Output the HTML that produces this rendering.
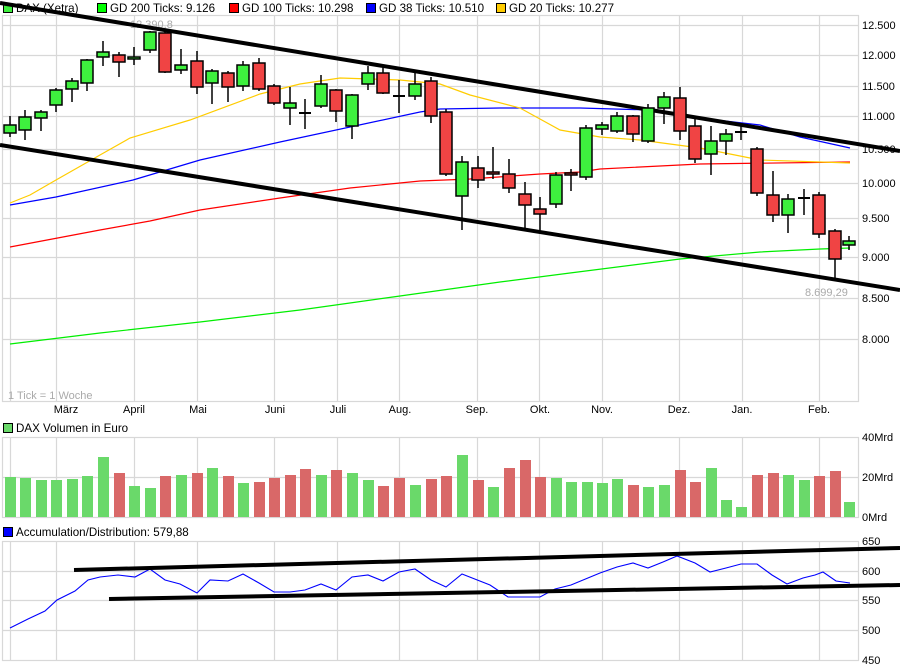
<!DOCTYPE html>
<html><head><meta charset="utf-8"><style>
html,body{margin:0;padding:0;background:#fff;}
svg{display:block;font-family:"Liberation Sans",Arial,sans-serif;}
</style></head><body>
<svg width="900" height="670" viewBox="0 0 900 670" xmlns="http://www.w3.org/2000/svg">
<rect width="900" height="670" fill="#fff"/>
<!-- legend -->
<g font-size="11.6" fill="#000">
<rect x="3.5" y="3.5" width="9" height="9" fill="#3ef03e" stroke="#000"/><text x="16" y="12">DAX (Xetra)</text>
<rect x="97.5" y="3.5" width="9" height="9" fill="#00ff00" stroke="#000"/><text x="110" y="12">GD 200 Ticks: 9.126</text>
<rect x="229.5" y="3.5" width="9" height="9" fill="#ff0000" stroke="#000"/><text x="242" y="12">GD 100 Ticks: 10.298</text>
<rect x="366.5" y="3.5" width="9" height="9" fill="#0000ff" stroke="#000"/><text x="379" y="12">GD 38 Ticks: 10.510</text>
<rect x="496.5" y="3.5" width="9" height="9" fill="#ffcc00" stroke="#000"/><text x="509" y="12">GD 20 Ticks: 10.277</text>
</g>
<!-- main grid -->
<g stroke="#d8d8d8" stroke-width="1.2" fill="none">
<rect x="2.5" y="15.5" width="856" height="386"/>
<path d="M2 25.5H858M2 55.5H858M2 86.5H858M2 116.5H858M2 149.5H858M2 183.5H858M2 218.5H858M2 257.5H858M2 298.5H858M2 339.5H858"/>
<path d="M10.5 15V402M56.5 15V402M134.5 15V402M197.5 15V402M274.5 15V402M337.5 15V402M399.5 15V402M477.5 15V402M539.5 15V402M602.5 15V402M679.5 15V402M742.5 15V402M819.5 15V402"/>
</g>
<g font-size="11" fill="#000">
<text x="862" y="29">12.500</text><text x="862" y="59">12.000</text><text x="862" y="90">11.500</text><text x="862" y="120">11.000</text><text x="862" y="153">10.500</text><text x="862" y="187">10.000</text><text x="862" y="222">9.500</text><text x="862" y="261">9.000</text><text x="862" y="302">8.500</text><text x="862" y="343">8.000</text>
</g>
<g font-size="11" fill="#000" text-anchor="middle">
<text x="66" y="413">März</text><text x="134" y="413">April</text><text x="198" y="413">Mai</text><text x="275" y="413">Juni</text><text x="338" y="413">Juli</text><text x="400" y="413">Aug.</text><text x="477" y="413">Sep.</text><text x="540" y="413">Okt.</text><text x="602" y="413">Nov.</text><text x="679" y="413">Dez.</text><text x="742" y="413">Jan.</text><text x="819" y="413">Feb.</text>
</g>
<text x="8" y="399" font-size="11" fill="#aaa">1 Tick = 1 Woche</text>
<text x="130" y="28" font-size="11" fill="#aaa">12.390,8</text>
<text x="805" y="296" font-size="11" fill="#aaa">8.699,29</text>
<!-- MAs -->
<g fill="none" stroke-width="1.2">
<polyline stroke="#00ee00" points="10,344 100,333 200,322 300,310 400,296 500,282 570,273 680,259 760,252 820,249 850,248"/>
<polyline stroke="#ff0000" points="10,247 100,230 150,221 200,210 280,198 350,188 420,181 470,179 540,174 580,172 600,169 700,164 850,162"/>
<polyline stroke="#0000ff" points="10,205 56,197 133,180 200,160 280,142 350,127 420,112 440,109 500,108 580,108 650,110 690,117 760,125 800,137 850,148"/>
<polyline stroke="#ffcc00" points="10,203 30,195 56,180 100,155 130,138 190,120 260,94 300,84 340,78 400,80 440,84 470,95 520,108 560,130 600,137 640,140 700,148 760,160 850,163"/>
</g>
<!-- trendlines -->
<g stroke="#000" stroke-width="4">
<line x1="0" y1="3" x2="900" y2="151"/>
<line x1="0" y1="145" x2="900" y2="290"/>
</g>
<!-- candles -->
<g stroke="#000" stroke-width="1.5">
<path d="M10 116V137M25 110V140M41 110V131M56 88V112M72 78V102M87 59V91M103 41V66M119 52V77M134 47V65M150 31V53M165 32V73M181 49V74M197 51V94M212 69V104M228 71V102M243 61V91M259 58V91M274 84V105M290 87V125M305 99V129M321 75V108M336 89V122M352 94V139M368 66V90M383 66V94M399 80V113M415 72V100M431 77V123M446 109V176M462 156V230M478 156V188M493 147V179M509 159V193M525 182V229M540 197V233M556 172V208M571 169V191M586 125V180M602 122V135M617 112V133M633 115V142M648 104V143M664 92V124M680 87V140M695 118V163M711 126V175M726 129V155M741 126V140M757 147V196M773 171V222M788 194V233M804 189V215M819 192V238M835 229V281M849 236V250"/>
<path d="M299 113H311M393 96H405M735 132H747M798 198H810M487 173H499M565 174H577" stroke-width="2"/>
<g fill="#3ef03e">
<rect x="4" y="125" width="12" height="8"/><rect x="19" y="117" width="12" height="13"/><rect x="35" y="112" width="12" height="6"/><rect x="50" y="90" width="12" height="15"/><rect x="66" y="81" width="12" height="8"/><rect x="81" y="60" width="12" height="23"/><rect x="97" y="52" width="12" height="5"/><rect x="128" y="57" width="12" height="2"/><rect x="144" y="32" width="12" height="18"/><rect x="175" y="65" width="12" height="5"/><rect x="206" y="71" width="12" height="12"/><rect x="237" y="65" width="12" height="21"/><rect x="284" y="103" width="12" height="5"/><rect x="315" y="84" width="12" height="22"/><rect x="346" y="95" width="12" height="31"/><rect x="362" y="73" width="12" height="11"/><rect x="409" y="84" width="12" height="12"/><rect x="456" y="162" width="12" height="34"/><rect x="550" y="175" width="12" height="29"/><rect x="580" y="128" width="12" height="49"/><rect x="596" y="125" width="12" height="4"/><rect x="611" y="116" width="12" height="15"/><rect x="642" y="108" width="12" height="33"/><rect x="658" y="97" width="12" height="11"/><rect x="705" y="141" width="12" height="13"/><rect x="720" y="134" width="12" height="7"/><rect x="782" y="199" width="12" height="16"/><rect x="843" y="241" width="12" height="4"/>
</g>
<g fill="#f04444">
<rect x="113" y="55" width="12" height="7"/><rect x="159" y="33" width="12" height="39"/><rect x="191" y="61" width="12" height="26"/><rect x="222" y="73" width="12" height="14"/><rect x="253" y="63" width="12" height="26"/><rect x="268" y="86" width="12" height="17"/><rect x="330" y="90" width="12" height="21"/><rect x="377" y="73" width="12" height="20"/><rect x="425" y="81" width="12" height="35"/><rect x="440" y="112" width="12" height="62"/><rect x="472" y="168" width="12" height="12"/><rect x="487" y="172" width="12" height="2"/><rect x="503" y="174" width="12" height="14"/><rect x="519" y="194" width="12" height="11"/><rect x="534" y="209" width="12" height="5"/><rect x="565" y="173" width="12" height="2"/><rect x="627" y="116" width="12" height="18"/><rect x="674" y="98" width="12" height="33"/><rect x="689" y="126" width="12" height="33"/><rect x="751" y="149" width="12" height="44"/><rect x="767" y="195" width="12" height="20"/><rect x="813" y="195" width="12" height="39"/><rect x="829" y="231" width="12" height="28"/>
</g>
</g>
<!-- volume -->
<rect x="3.5" y="423.5" width="9" height="9" fill="#6ad96a" stroke="#000"/>
<text x="16" y="432" font-size="11.6">DAX Volumen in Euro</text>
<g stroke="#d8d8d8" stroke-width="1.2" fill="none">
<rect x="2.5" y="437.5" width="856" height="80"/>
<path d="M2 477.5H858"/>
<path d="M10.5 437V517M56.5 437V517M134.5 437V517M197.5 437V517M274.5 437V517M337.5 437V517M399.5 437V517M477.5 437V517M539.5 437V517M602.5 437V517M679.5 437V517M742.5 437V517M819.5 437V517"/>
</g>
<g font-size="11"><text x="862" y="441">40Mrd</text><text x="862" y="481">20Mrd</text><text x="862" y="521">0Mrd</text></g>
<g fill="#6ad96a">
<rect x="5" y="477" width="11" height="40"/><rect x="20" y="478" width="11" height="39"/><rect x="36" y="480" width="11" height="37"/><rect x="51" y="480" width="11" height="37"/><rect x="67" y="479" width="11" height="38"/><rect x="82" y="476" width="11" height="41"/><rect x="98" y="457" width="11" height="60"/><rect x="129" y="486" width="11" height="31"/><rect x="145" y="488" width="11" height="29"/><rect x="176" y="475" width="11" height="42"/><rect x="207" y="468" width="11" height="49"/><rect x="238" y="483" width="11" height="34"/><rect x="316" y="475" width="11" height="42"/><rect x="347" y="473" width="11" height="44"/><rect x="363" y="480" width="11" height="37"/><rect x="410" y="485" width="11" height="32"/><rect x="457" y="455" width="11" height="62"/><rect x="488" y="487" width="11" height="30"/><rect x="551" y="478" width="11" height="39"/><rect x="566" y="482" width="11" height="35"/><rect x="582" y="482" width="11" height="35"/><rect x="597" y="483" width="11" height="34"/><rect x="612" y="479" width="11" height="38"/><rect x="643" y="487" width="11" height="30"/><rect x="659" y="485" width="11" height="32"/><rect x="706" y="468" width="11" height="49"/><rect x="721" y="500" width="11" height="17"/><rect x="736" y="507" width="11" height="10"/><rect x="783" y="475" width="11" height="42"/><rect x="799" y="480" width="11" height="37"/><rect x="844" y="502" width="11" height="15"/>
</g>
<g fill="#d96868">
<rect x="114" y="473" width="11" height="44"/><rect x="160" y="476" width="11" height="41"/><rect x="192" y="473" width="11" height="44"/><rect x="223" y="476" width="11" height="41"/><rect x="254" y="482" width="11" height="35"/><rect x="269" y="478" width="11" height="39"/><rect x="285" y="475" width="11" height="42"/><rect x="300" y="469" width="11" height="48"/><rect x="331" y="470" width="11" height="47"/><rect x="378" y="486" width="11" height="31"/><rect x="394" y="478" width="11" height="39"/><rect x="426" y="479" width="11" height="38"/><rect x="441" y="476" width="11" height="41"/><rect x="473" y="480" width="11" height="37"/><rect x="504" y="468" width="11" height="49"/><rect x="520" y="460" width="11" height="57"/><rect x="535" y="477" width="11" height="40"/><rect x="628" y="485" width="11" height="32"/><rect x="675" y="470" width="11" height="47"/><rect x="690" y="482" width="11" height="35"/><rect x="752" y="475" width="11" height="42"/><rect x="768" y="473" width="11" height="44"/><rect x="814" y="476" width="11" height="41"/><rect x="830" y="471" width="11" height="46"/>
</g>
<!-- A/D -->
<rect x="3.5" y="527.5" width="9" height="9" fill="#0000ff" stroke="#000"/>
<text x="16" y="536" font-size="11.6">Accumulation/Distribution: 579,88</text>
<g stroke="#d8d8d8" stroke-width="1.2" fill="none">
<rect x="2.5" y="541.5" width="856" height="119"/>
<path d="M2 571.5H858M2 600.5H858M2 630.5H858"/>
<path d="M10.5 541V660M56.5 541V660M134.5 541V660M197.5 541V660M274.5 541V660M337.5 541V660M399.5 541V660M477.5 541V660M539.5 541V660M602.5 541V660M679.5 541V660M742.5 541V660M819.5 541V660"/>
</g>
<g font-size="11"><text x="862" y="545">650</text><text x="862" y="575">600</text><text x="862" y="604">550</text><text x="862" y="634">500</text><text x="862" y="664">450</text></g>
<polyline fill="none" stroke="#0000ff" stroke-width="1.1" points="10,628 28,619 45,611 57,600 75,591 88,580 100,577 118,575 135,577 150,569 165,580 180,584 197,593 210,580 228,581 243,574 259,583 274,592 290,592 305,590 321,584 336,590 352,577 368,575 383,581 399,572 415,569 431,580 446,587 462,574 490,585 508,597 540,597 555,589 571,585 600,573 617,567 633,563 648,568 663,562 677,556 695,563 710,572 726,568 741,564 757,564 772,575 787,584 803,578 815,575 823,572 836,581 850,583"/>
<g stroke="#000" stroke-width="4">
<line x1="74" y1="570" x2="900" y2="548"/>
<line x1="109" y1="599" x2="900" y2="585"/>
</g>
</svg>
</body></html>
